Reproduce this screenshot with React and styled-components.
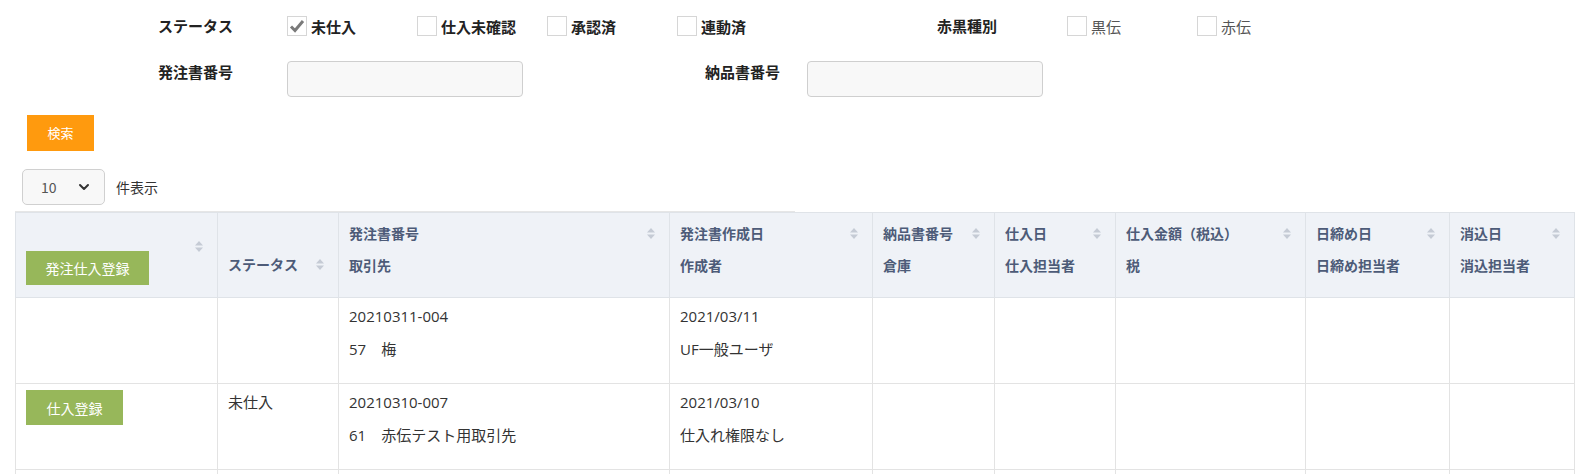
import styled, { createGlobalStyle } from "styled-components";
import { ChevronDown } from "lucide-react";

const GlobalStyle = createGlobalStyle`
  body {
    margin: 0;
    background: #fff;
    font-family: "Noto Sans CJK JP", "Noto Sans", sans-serif;
    color: #333;
  }
`;

const columns = [202, 121, 331, 203, 122, 121, 190, 144, 125];

const headers = [
  ["発注書番号", "取引先"],
  ["発注書作成日", "作成者"],
  ["納品書番号", "倉庫"],
  ["仕入日", "仕入担当者"],
  ["仕入金額（税込）", "税"],
  ["日締め日", "日締め担当者"],
  ["消込日", "消込担当者"],
];

const rows = [
  {
    action: null,
    status: "",
    order: ["20210311-004", "57\u3000梅"],
    created: ["2021/03/11", "UF一般ユーザ"],
  },
  {
    action: "仕入登録",
    status: "未仕入",
    order: ["20210310-007", "61\u3000赤伝テスト用取引先"],
    created: ["2021/03/10", "仕入れ権限なし"],
  },
];

function SortArrows({ top }) {
  return (
    <SortIcon $top={top} width="8" height="13" viewBox="0 0 8 13">
      <path d="M0 5.5 L4 1 L8 5.5 Z" fill="#c5cbd5" />
      <path d="M0 7.5 L4 12 L8 7.5 Z" fill="#c5cbd5" />
    </SortIcon>
  );
}

function CheckItem({ label, checked, light }) {
  return (
    <Check>
      <Box>
        {checked ? (
          <svg width="16" height="14" viewBox="0 0 16 14">
            <path d="M2 7.5 L6 11.5 L14 2" stroke="#7a7a7a" strokeWidth="3" fill="none" />
          </svg>
        ) : null}
      </Box>
      <CheckLabel $light={light}>{label}</CheckLabel>
    </Check>
  );
}

function App() {
  return (
    <>
      <GlobalStyle />
      <Page>
        <FilterRow>
          <FilterLabel>ステータス</FilterLabel>
          <CheckItem label="未仕入" checked />
          <CheckItem label="仕入未確認" />
          <CheckItem label="承認済" />
          <CheckItem label="連動済" />
          <span />
          <FilterLabel>赤黒種別</FilterLabel>
          <CheckItem label="黒伝" light />
          <CheckItem label="赤伝" light />
        </FilterRow>
        <FilterRow $inputs>
          <FilterLabel>発注書番号</FilterLabel>
          <TextInput />
          <span />
          <FilterLabel $indent>納品書番号</FilterLabel>
          <TextInput />
        </FilterRow>
        <SearchButton>検索</SearchButton>
        <LengthRow>
          <Select>
            <span>10</span>
            <ChevronDown size={16} strokeWidth={3} color="#333" />
          </Select>
          <LengthLabel>件表示</LengthLabel>
        </LengthRow>
        <Divider />
        <Table>
          <colgroup>
            {columns.map((w, i) => (
              <col key={i} style={{ width: w }} />
            ))}
          </colgroup>
          <thead>
            <tr>
              <Th $bottom $pad={12}>
                <GreenButton $w={123} $h={34}>発注仕入登録</GreenButton>
                <SortArrows top={27} />
              </Th>
              <Th $bottom $pad={17}>
                <HeadLine>ステータス</HeadLine>
                <SortArrows top={45} />
              </Th>
              {headers.map(([a, b]) => (
                <Th key={a}>
                  <HeadLine>{a}</HeadLine>
                  <HeadLine>{b}</HeadLine>
                  <SortArrows top={14} />
                </Th>
              ))}
            </tr>
          </thead>
          <tbody>
            {rows.map((r, i) => (
              <tr key={i}>
                <Td $btn>
                  {r.action ? (
                    <GreenButton $w={97} $h={35}>{r.action}</GreenButton>
                  ) : null}
                </Td>
                <Td>
                  <Line>{r.status}</Line>
                </Td>
                <Td>
                  <Line>{r.order[0]}</Line>
                  <Line>{r.order[1]}</Line>
                </Td>
                <Td>
                  <Line>{r.created[0]}</Line>
                  <Line>{r.created[1]}</Line>
                </Td>
                <Td />
                <Td />
                <Td />
                <Td />
                <Td />
              </tr>
            ))}
            <tr>
              {columns.map((w, i) => (
                <Td key={i} />
              ))}
            </tr>
          </tbody>
        </Table>
      </Page>
    </>
  );
}

const Page = styled.div`
  padding-top: 15px;
`;
const FilterRow = styled.div`
  display: grid;
  grid-template-columns: 129px repeat(8, 130px);
  margin-left: 158px;
  align-items: ${({ $inputs }) => ($inputs ? "start" : "center")};
  height: ${({ $inputs }) => ($inputs ? "36px" : "20px")};
  margin-top: ${({ $inputs }) => ($inputs ? "26px" : "0")};
`;
const FilterLabel = styled.div`
  font-size: 15px;
  font-weight: 700;
  color: #222;
  line-height: 22px;
  padding-left: ${({ $indent }) => ($indent ? "28px" : "0")};
  white-space: nowrap;
`;
const Check = styled.label`
  display: flex;
  align-items: center;
  gap: 4px;
  height: 20px;
`;
const Box = styled.span`
  width: 18px;
  height: 18px;
  border: 1px solid #d6d6d6;
  background: #fff;
  display: flex;
  justify-content: center;
  align-items: center;
`;
const CheckLabel = styled.span`
  font-size: 15px;
  font-weight: ${({ $light }) => ($light ? 400 : 700)};
  color: ${({ $light }) => ($light ? "#555" : "#222")};
  white-space: nowrap;
`;
const TextInput = styled.div`
  grid-column: span 2;
  width: 234px;
  height: 34px;
  border: 1px solid #cfcfcf;
  border-radius: 4px;
  background: #f8f8f8;
`;
const SearchButton = styled.button`
  display: block;
  margin: 18px 0 0 27px;
  width: 67px;
  height: 36px;
  border: none;
  background: #ff9a0e;
  color: #fff;
  font-family: inherit;
  font-size: 13px;
  padding: 0 0 2px;
`;
const LengthRow = styled.div`
  display: flex;
  align-items: center;
  margin: 18px 0 0 22px;
  gap: 11px;
`;
const Select = styled.div`
  box-sizing: border-box;
  width: 83px;
  height: 36px;
  border: 1px solid #d0d0d0;
  border-radius: 5px;
  background: #f8f8f8;
  display: flex;
  align-items: center;
  justify-content: space-between;
  padding: 0 12px 0 18px;
  font-size: 14px;
  color: #555;
`;
const LengthLabel = styled.span`
  font-size: 14px;
  color: #333;
`;
const Divider = styled.div`
  margin: 6px 0 0 15px;
  width: 780px;
  height: 1px;
  background: #e6e6e6;
`;
const Table = styled.table`
  margin-left: 15px;
  width: 1559px;
  border-collapse: collapse;
  table-layout: fixed;
`;
const Th = styled.th`
  position: relative;
  background: #eff2f7;
  border: 1px solid #dfe3e8;
  text-align: left;
  vertical-align: ${({ $bottom }) => ($bottom ? "bottom" : "top")};
  padding: ${({ $pad }) => `4px 10px ${$pad ?? 16}px`};
  height: 84px;
  box-sizing: border-box;
  color: #4d5b78;
  font-size: 14px;
  font-weight: 700;
`;
const HeadLine = styled.div`
  line-height: 32px;
  white-space: nowrap;
`;
const SortIcon = styled.svg`
  position: absolute;
  right: 14px;
  top: ${({ $top }) => $top}px;
`;
const GreenButton = styled.div`
  width: ${({ $w }) => $w}px;
  height: ${({ $h }) => $h}px;
  background: #97b75a;
  color: #fff;
  font-size: 14px;
  font-weight: 400;
  display: flex;
  align-items: center;
  justify-content: center;
`;
const Td = styled.td`
  border: 1px solid #e3e3e3;
  vertical-align: top;
  padding: ${({ $btn }) => ($btn ? "6px 10px 0" : "2px 10px 0")};
  height: 86px;
  box-sizing: border-box;
  font-family: "Open Sans", "Noto Sans CJK JP", sans-serif;
  font-size: 15px;
  color: #333;
`;
const Line = styled.div`
  line-height: 33px;
  white-space: nowrap;
`;

export default App;
